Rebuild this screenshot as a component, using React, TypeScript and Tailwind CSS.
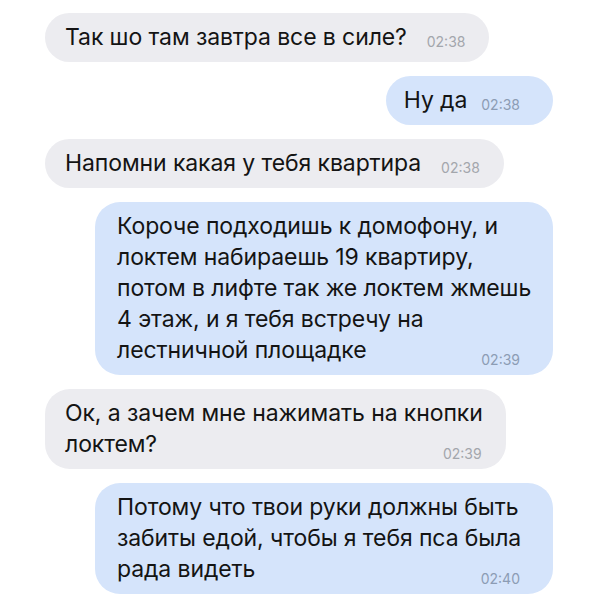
const font = { fontFamily: 'Inter, "Liberation Sans", Arial, sans-serif' };

type Msg = {
  lines: string[];
  time: string;
  out?: boolean;
};

const messages: Msg[] = [
  { lines: ["Так шо там завтра все в силе?"], time: "02:38" },
  { lines: ["Ну да"], time: "02:38", out: true },
  { lines: ["Напомни какая у тебя квартира"], time: "02:38" },
  {
    lines: [
      "Короче подходишь к домофону, и",
      "локтем набираешь 19 квартиру,",
      "потом в лифте так же локтем жмешь",
      "4 этаж, и я тебя встречу на",
      "лестничной площадке",
    ],
    time: "02:39",
    out: true,
  },
  { lines: ["Ок, а зачем мне нажимать на кнопки", "локтем?"], time: "02:39" },
  {
    lines: [
      "Потому что твои руки должны быть",
      "забиты едой, чтобы я тебя пса была",
      "рада видеть",
    ],
    time: "02:40",
    out: true,
  },
];

function Bubble({ m }: { m: Msg }) {
  const bg = m.out ? "bg-[#d5e4fb]" : "bg-[#ececf0]";
  const timeColor = m.out ? "text-[#8c9cb4]" : "text-[#a3a6ac]";

  if (m.lines.length === 1) {
    const pad = m.out ? "pl-[18px] pr-[33px] gap-[14px]" : "pl-[20px] pr-[24px] gap-[20px]";
    return (
      <div className={`flex items-baseline rounded-[25px] ${bg} h-[49px] ${pad} pt-[9px]`}>
        <span className="whitespace-nowrap text-[23px] leading-[31px] tracking-[-0.1px] text-[#141414]">{m.lines[0]}</span>
        <span className={`text-[14px] translate-y-[2px] ${timeColor}`}>{m.time}</span>
      </div>
    );
  }

  return (
    <div className={`grid rounded-[25px] ${bg} ${m.out ? "pl-[22px] pr-[20px]" : "pl-[20px] pr-[23px]"} pt-[9px] pb-[9px]`}>
      <div className="[grid-area:1/1] whitespace-nowrap text-[23px] leading-[31px] tracking-[-0.1px] text-[#141414]">
        {m.lines.map((l, i) => (
          <div key={i}>{l}</div>
        ))}
      </div>
      <span
        className={`[grid-area:1/1] self-end justify-self-end text-[14px] mb-[-4px] ${m.out ? "mr-[13px]" : "mr-[1px]"} ${timeColor}`}
      >
        {m.time}
      </span>
    </div>
  );
}

export default function App() {
  return (
    <div className="w-[604px] h-[604px] bg-white overflow-hidden" style={font}>
      <div className="flex flex-col gap-[14px] pt-[13px] pl-[45px] pr-[51px]">
        {messages.map((m, i) => (
          <div key={i} className={`flex ${m.out ? "justify-end" : "justify-start"}`}>
            <div className={m.out && m.lines.length > 1 ? "w-[458px]" : ""}>
              <Bubble m={m} />
            </div>
          </div>
        ))}
      </div>
    </div>
  );
}
